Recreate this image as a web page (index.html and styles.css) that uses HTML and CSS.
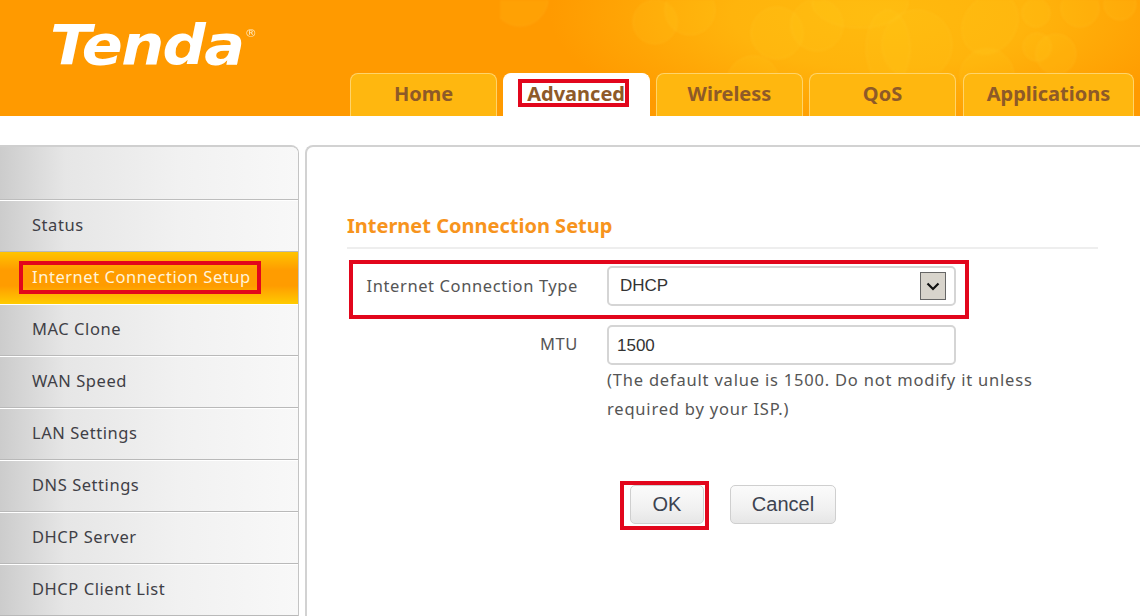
FILE: index.html
```html
<!DOCTYPE html>
<html lang="en">
<head>
  <meta charset="UTF-8">
  <title>Tenda - Internet Connection Setup</title>
  <link rel="stylesheet" href="styles.css">
</head>
<body>

<!-- Top banner -->
<div class="header">
  <svg class="bubbles" width="640" height="116" viewBox="500 0 640 116">
    <g fill="#ffd020" fill-opacity="0.13" stroke="#ffd84a" stroke-opacity="0.16">
      <circle cx="520" cy="-2" r="28"/>
      <circle cx="655" cy="22" r="22"/>
      <circle cx="690" cy="10" r="25"/>
      <circle cx="777" cy="33" r="26"/>
      <circle cx="817" cy="25" r="26"/>
      <circle cx="753" cy="82" r="26"/>
      <ellipse cx="860" cy="2" rx="48" ry="26"/>
      <circle cx="917" cy="45" r="35"/>
      <ellipse cx="888" cy="48" rx="22" ry="38"/>
      <ellipse cx="990" cy="24" rx="26" ry="32" transform="rotate(35 990 24)"/>
      <circle cx="987" cy="76" r="27"/>
      <circle cx="1037" cy="47" r="14"/>
      <circle cx="1056" cy="54" r="20"/>
      <circle cx="1036" cy="13" r="14"/>
      <circle cx="1080" cy="8" r="19"/>
      <circle cx="1120" cy="4" r="16"/>
    </g>
  </svg>
  <div class="logo">Tenda<sup>®</sup></div>
  <div class="tabs">
    <a class="tab">Home</a>
    <a class="tab active"><span class="mark">Advanced</span></a>
    <a class="tab">Wireless</a>
    <a class="tab">QoS</a>
    <a class="tab wide">Applications</a>
  </div>
</div>

<div class="content">
  <!-- Left menu -->
  <div class="sidebar">
    <div class="side-top"></div>
    <a class="side-item">Status</a>
    <a class="side-item active"><span class="mark">Internet Connection Setup</span></a>
    <a class="side-item">MAC Clone</a>
    <a class="side-item">WAN Speed</a>
    <a class="side-item">LAN Settings</a>
    <a class="side-item">DNS Settings</a>
    <a class="side-item">DHCP Server</a>
    <a class="side-item">DHCP Client List</a>
  </div>

  <!-- Settings form -->
  <div class="panel">
    <h1>Internet Connection Setup</h1>
    <div class="row row-type">
      <label>Internet Connection Type</label>
      <div class="field select">
        <span>DHCP</span>
        <span class="arrow">
          <svg width="14" height="9" viewBox="0 0 14 9"><path d="M1.5 1.5 L7 7 L12.5 1.5" fill="none" stroke="#111" stroke-width="2.2"/></svg>
        </span>
      </div>
    </div>
    <div class="row row-mtu">
      <label>MTU</label>
      <input class="field" type="text" value="1500">
    </div>
    <p class="hint">(The default value is 1500. Do not modify it unless<br>required by your ISP.)</p>
    <div class="buttons">
      <span class="ok-mark"><button class="btn ok">OK</button></span>
      <button class="btn cancel">Cancel</button>
    </div>
  </div>
</div>

</body>
</html>
```

FILE: styles.css
```css
/* General */
html, body {
  height: 616px;
}
body {
  margin: 0;
  overflow: hidden;
  background-color: #ffffff;
  font-family: "Noto Sans", sans-serif;
  color: #444444;
}

/* Banner */
.header {
  position: relative;
  height: 116px;
  background:
    radial-gradient(ellipse 330px 120px at 880px 15px, #ffba0e 0%, #ffb40c 45%, rgba(255, 166, 4, 0) 100%),
    #ff9a00;
  overflow: hidden;
}
.bubbles {
  position: absolute;
  top: 0;
  right: 0;
  filter: blur(0.8px);
}
.logo {
  position: absolute;
  top: 13px;
  left: 50px;
  font-family: "DejaVu Sans", sans-serif;
  font-size: 55px;
  font-weight: bold;
  font-style: italic;
  letter-spacing: -1.5px;
  color: #ffffff;
  transform: scaleX(1.1);
  transform-origin: left center;
}
.logo sup {
  position: absolute;
  top: 15px;
  left: 177px;
  font-size: 11px;
  font-weight: normal;
  font-style: normal;
  letter-spacing: 0;
  line-height: 1;
  color: #ffe6b8;
}
.tabs {
  position: absolute;
  left: 350px;
  bottom: 0;
  display: flex;
  gap: 6px;
}
.tab {
  display: flex;
  align-items: center;
  justify-content: center;
  box-sizing: border-box;
  width: 147px;
  height: 43px;
  padding-bottom: 4px;
  border: 1px solid #ffd46a;
  border-bottom: none;
  border-radius: 8px 8px 0 0;
  background-color: #ffb70f;
  font-size: 20px;
  font-weight: bold;
  color: #8e5a28;
}
.tab.wide {
  width: 171px;
  margin-left: 1px;
}
.tab.active {
  border-color: #ffffff;
  background-color: #ffffff;
}
.mark {
  outline: 4px solid #e2061c;
}
.tab .mark {
  box-sizing: border-box;
  width: 103px;
  height: 20px;
  display: flex;
  align-items: center;
  justify-content: flex-end;
  margin-right: 6px;
  font-size: 20px;
}

/* Page body */
.content {
  display: flex;
  gap: 6px;
  padding-top: 29px;
}

/* Left menu */
.sidebar {
  box-sizing: border-box;
  flex: 0 0 299px;
  height: 480px;
  border-top: 2px solid #cfcfcf;
  border-right: 1px solid #c4c4c4;
  border-radius: 0 8px 0 0;
  overflow: hidden;
}
.side-top, .side-item {
  background: linear-gradient(90deg, #cccccc 0%, #e6e6e6 22%, #f1f1f1 60%, #f8f8f8 100%);
}
.side-top {
  height: 52px;
  border-bottom: 1px solid #bdbdbd;
}
.side-item {
  display: flex;
  align-items: center;
  box-sizing: border-box;
  height: 52px;
  padding-left: 32px;
  padding-bottom: 2px;
  border-bottom: 1px solid #b9b9b9;
  box-shadow: inset 0 1px 0 #ffffff;
  font-size: 16.5px;
  letter-spacing: 0.55px;
  color: #3f3f46;
}
.side-item.active {
  background: linear-gradient(180deg, #ffc400 0%, #ff9c00 35%, #ff9c00 65%, #ffcb00 100%);
  border-bottom: none;
  box-shadow: none;
  color: #fff3d8;
}
.side-item .mark {
  display: block;
  margin-left: -9px;
  padding: 2px 6px 3px 9px;
  line-height: 20px;
  white-space: nowrap;
}

/* Settings form */
.panel {
  box-sizing: border-box;
  flex: 1;
  height: 480px;
  padding: 65px 42px 0 40px;
  border: 2px solid #d2d2d2;
  border-right: none;
  border-radius: 8px 0 0 0;
}
.panel h1 {
  margin: 0;
  padding-bottom: 8px;
  border-bottom: 2px solid #eeeeee;
  font-size: 20px;
  line-height: 27px;
  font-weight: bold;
  color: #f7941d;
}
.row {
  display: flex;
  align-items: center;
  gap: 29px;
}
.row label {
  flex: 0 0 231px;
  text-align: right;
  font-size: 16.5px;
  letter-spacing: 0.6px;
  color: #555555;
}
.row-mtu label {
  padding-bottom: 4px;
}
.row-type {
  box-sizing: border-box;
  align-items: flex-start;
  width: 620px;
  height: 59px;
  margin: 11px 0 6px 2px;
  border: 4px solid #e2061c;
}
.row-type label {
  flex: 0 0 225px;
  margin-top: 10px;
}
.row-type .field {
  margin-top: 2px;
}
.field {
  box-sizing: border-box;
  width: 349px;
  height: 40px;
  padding: 0 11px;
  border: 2px solid #d5d5d5;
  border-radius: 5px;
  background-color: #ffffff;
  font-family: "Liberation Sans", sans-serif;
  font-size: 17px;
  color: #333333;
}
input.field {
  padding: 1px 0 0 8px;
}
.select {
  display: flex;
  align-items: center;
  justify-content: space-between;
  padding-right: 8px;
}
.arrow {
  box-sizing: border-box;
  display: flex;
  align-items: center;
  justify-content: center;
  width: 26px;
  height: 28px;
  border: 1px solid #666666;
  background-color: #d8d4cc;
}
.hint {
  margin: 0 0 0 260px;
  font-size: 16.5px;
  line-height: 29px;
  letter-spacing: 0.8px;
  color: #555555;
}
.buttons {
  display: flex;
  align-items: flex-start;
  gap: 21px;
  margin: 58px 0 0 273px;
}
.ok-mark {
  display: flex;
  align-items: flex-start;
  justify-content: flex-end;
  box-sizing: border-box;
  width: 89px;
  height: 49px;
  padding-right: 1px;
  border: 4px solid #e2061c;
}
.btn {
  box-sizing: border-box;
  height: 39px;
  border: 1px solid #cfcfcf;
  border-radius: 5px;
  background: linear-gradient(180deg, #fbfbfb 0%, #f1f1f1 60%, #e6e6e6 100%);
  font-family: "Liberation Sans", sans-serif;
  font-size: 20px;
  color: #3d4350;
}
.ok {
  width: 74px;
}
.cancel {
  width: 106px;
  margin-top: 4px;
}
```
